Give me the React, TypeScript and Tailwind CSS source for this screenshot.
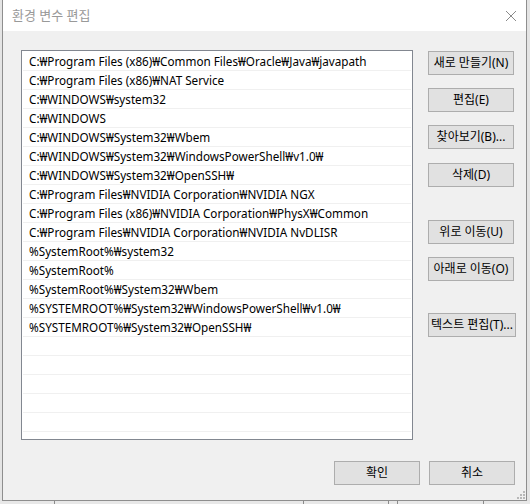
import React from "react";

const rows = [
  "C:₩Program Files (x86)₩Common Files₩Oracle₩Java₩javapath",
  "C:₩Program Files (x86)₩NAT Service",
  "C:₩WINDOWS₩system32",
  "C:₩WINDOWS",
  "C:₩WINDOWS₩System32₩Wbem",
  "C:₩WINDOWS₩System32₩WindowsPowerShell₩v1.0₩",
  "C:₩WINDOWS₩System32₩OpenSSH₩",
  "C:₩Program Files₩NVIDIA Corporation₩NVIDIA NGX",
  "C:₩Program Files (x86)₩NVIDIA Corporation₩PhysX₩Common",
  "C:₩Program Files₩NVIDIA Corporation₩NVIDIA NvDLISR",
  "%SystemRoot%₩system32",
  "%SystemRoot%",
  "%SystemRoot%₩System32₩Wbem",
  "%SYSTEMROOT%₩System32₩WindowsPowerShell₩v1.0₩",
  "%SYSTEMROOT%₩System32₩OpenSSH₩",
];

const allRows = [...rows, ...Array(6).fill("")];

function Btn({ label, className = "" }: { label: string; className?: string }) {
  return (
    <div
      className={
        "h-[24px] flex items-center justify-center bg-[#e1e1e1] border border-[#adadad] text-[12px] text-black whitespace-nowrap " +
        className
      }
    >
      {label}
    </div>
  );
}

export default function App() {
  return (
    <div
      className="w-[530px] h-[504px] bg-[#e4e4e4] overflow-hidden flex flex-col"
      style={{ fontFamily: '"Noto Sans","Noto Sans CJK KR",sans-serif' }}
    >
      <div className="ml-[2px] w-[525px] h-[501px] shrink-0 border-x border-b border-[#8e8e8e] bg-[#f0f0f0] flex flex-col relative">
        <div className="h-[31px] bg-white flex items-center justify-between pl-[9px] pr-[8px] shrink-0">
          <span className="text-[13px] text-[#999999] leading-none">환경 변수 편집</span>
          <svg width="12" height="12" viewBox="0 0 12 12" className="mr-[1px]">
            <path d="M1 1L11 11M11 1L1 11" stroke="#8a8a8a" strokeWidth="1" />
          </svg>
        </div>
        <div className="flex pl-[18px] pt-[19px]">
          <div className="w-[392px] h-[390px] border border-[#828790] bg-white overflow-hidden px-[1px] pt-[1px]">
            {allRows.map((r, i) => (
              <div
                key={i}
                className="h-[19px] border-b border-[#f0f0f0] pl-[6px] pt-[1px] flex items-center text-[11.7px] text-black whitespace-nowrap leading-none"
              >
                {r}
              </div>
            ))}
          </div>
          <div className="ml-[15px] flex flex-col">
            <Btn label="새로 만들기(N)" className="mt-[1px] w-[86px]" />
            <Btn label="편집(E)" className="mt-[13px] w-[86px]" />
            <Btn label="찾아보기(B)..." className="mt-[13px] w-[86px]" />
            <Btn label="삭제(D)" className="mt-[14px] w-[86px]" />
            <Btn label="위로 이동(U)" className="mt-[33px] w-[86px]" />
            <Btn label="아래로 이동(O)" className="mt-[13px] w-[86px]" />
            <Btn label="텍스트 편집(T)..." className="mt-[32px] w-[88px]" />
          </div>
        </div>
        <div className="flex justify-end gap-[9px] pr-[11px] mt-[21px]">
          <Btn label="확인" className="w-[86px]" />
          <Btn label="취소" className="w-[86px]" />
        </div>
        <svg width="8" height="8" viewBox="0 0 8 8" className="absolute right-[1px] bottom-[1px]">
          <rect x="6" y="0" width="2" height="2" fill="#b8b8b8" />
          <rect x="3" y="3" width="2" height="2" fill="#b8b8b8" />
          <rect x="6" y="3" width="2" height="2" fill="#b8b8b8" />
          <rect x="0" y="6" width="2" height="2" fill="#b8b8b8" />
          <rect x="3" y="6" width="2" height="2" fill="#b8b8b8" />
          <rect x="6" y="6" width="2" height="2" fill="#b8b8b8" />
        </svg>
      </div>
      <div className="flex h-[3px] bg-[#e8e8e8]">
        <div className="w-[54px]" />
        <div className="w-[249px] border-l border-[#8a8a8a]" />
        <div className="w-[85px] border-l border-[#8a8a8a]" />
        <div className="w-[9px] border-l border-[#8a8a8a]" />
        <div className="w-[86px] border-l border-[#8a8a8a]" />
        <div className="flex-1 border-l border-[#8a8a8a]" />
      </div>
    </div>
  );
}
